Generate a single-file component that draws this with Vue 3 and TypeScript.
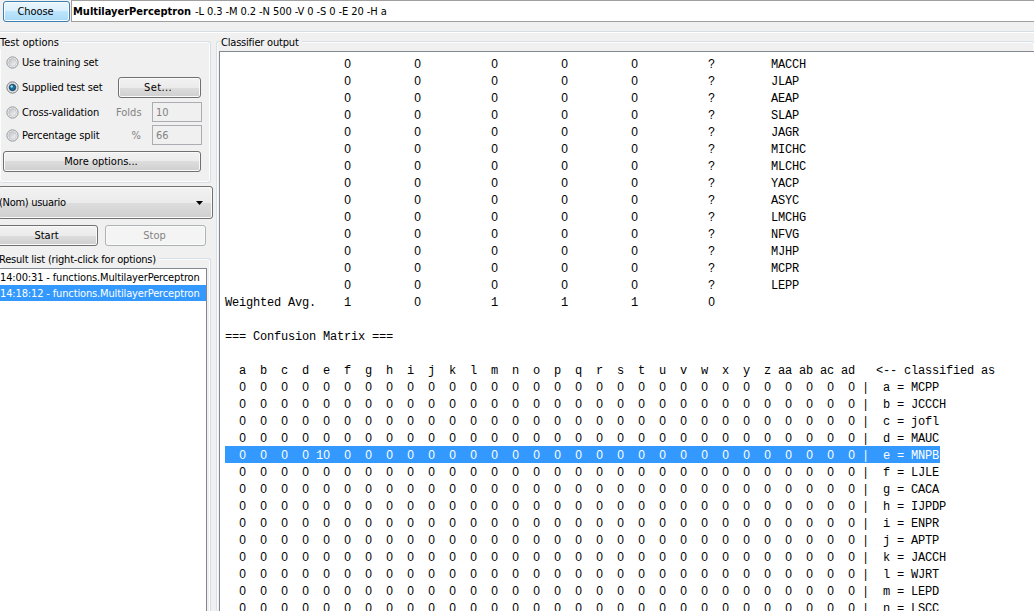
<script setup lang="ts">
const testOptions = [
  { label: 'Use training set', on: false, cls: 'training' },
  { label: 'Supplied test set', on: true, cls: 'supplied' },
  { label: 'Cross-validation', on: false, cls: 'cross' },
  { label: 'Percentage split', on: false, cls: 'percent' },
]

const results = ['14:00:31 - functions.MultilayerPerceptron', '14:18:12 - functions.MultilayerPerceptron']

const summaryClasses = [
  'MACCH', 'JLAP', 'AEAP', 'SLAP', 'JAGR', 'MICHC', 'MLCHC',
  'YACP', 'ASYC', 'LMCHG', 'NFVG', 'MJHP', 'MCPR', 'LEPP',
]
const matrixClasses = [
  'MCPP', 'JCCCH', 'jofl', 'MAUC', 'MNPB', 'LJLE', 'CACA',
  'IJPDP', 'ENPR', 'APTP', 'JACCH', 'WJRT', 'LEPD', 'LSCC',
]

const stops = [17, 27, 38, 48, 58, 69]
function statLine(head: string, values: string[], tail: string): string {
  let line = head
  values.forEach((v, i) => { line = line.padEnd(stops[i]) + v })
  return tail ? line.padEnd(78) + tail : line
}

const letters = 'abcdefghijklmnopqrstuvwxyz'.split('')
const columns = [...letters, 'aa', 'ab', 'ac', 'ad']
const selectedClass = 4

interface Line { parts: string[]; selected: boolean }
function toLine(text: string, selected = false): Line {
  return { parts: text.split(/(0)/).filter((p) => p !== ''), selected }
}

const lines: Line[] = [
  ...summaryClasses.map((c) => toLine(statLine('', ['0', '0', '0', '0', '0', '?'], c))),
  toLine(statLine('Weighted Avg.', ['1', '0', '1', '1', '1', '0'], '')),
  toLine(''),
  toLine('=== Confusion Matrix ==='),
  toLine(''),
  toLine(columns.map((c) => c.padStart(3)).join('') + '   <-- classified as'),
  ...matrixClasses.map((c, row) => {
    const cells = columns.map((_, col) => (row === selectedClass && col === 4 ? '10' : '0').padStart(3)).join('')
    return toLine(`${cells} |  ${letters[row]} = ${c}`, row === selectedClass)
  }),
]
</script>

<template>
  <div class="window">
    <header class="chooser">
      <button class="btn choose"><span class="t-choose">Choose</span></button>
      <div class="scheme"><b>MultilayerPerceptron</b><span class="args">-L 0.3 -M 0.2 -N 500 -V 0 -S 0 -E 20 -H a</span></div>
    </header>
    <main class="body">
      <aside class="side">
        <section class="group options">
          <h2 class="title"><span class="t-test">Test options</span></h2>
          <div v-for="o in testOptions" :key="o.cls" class="option" :class="o.cls">
            <svg class="radio" width="13" height="13" viewBox="0 0 13 13">
              <defs>
                <linearGradient :id="'r-' + o.cls" x1="0" y1="0" x2="1" y2="1">
                  <stop offset="0" stop-color="#b9bdc2" />
                  <stop offset="1" stop-color="#fbfbfb" />
                </linearGradient>
              </defs>
              <circle cx="6.5" cy="6.5" r="5.6" fill="#f6f6f6" :stroke="o.on ? '#6f7275' : '#8e9092'" />
              <circle cx="6.5" cy="6.5" r="3.9" :fill="`url(#r-${o.cls})`" stroke="#b6babe" stroke-width=".7" />
              <template v-if="o.on">
                <circle cx="6.5" cy="6.5" r="3.1" fill="#1c6f9e" stroke="#123c58" />
                <circle cx="5.7" cy="5.5" r="1.2" fill="#8fdcf4" />
              </template>
            </svg>
            <span class="label">{{ o.label }}</span>
            <button v-if="o.cls === 'supplied'" class="btn set"><span class="t-set">Set...</span></button>
            <template v-if="o.cls === 'cross'">
              <span class="unit">Folds</span><span class="field">10</span>
            </template>
            <template v-if="o.cls === 'percent'">
              <span class="unit">%</span><span class="field">66</span>
            </template>
          </div>
          <button class="btn more"><span class="t-more">More options...</span></button>
        </section>
        <div class="btn combo">
          <span class="t-nom">(Nom) usuario</span>
          <svg width="7" height="4" viewBox="0 0 7 4"><path d="M0 0h7L3.5 4z" /></svg>
        </div>
        <div class="actions">
          <button class="btn start"><span>Start</span></button>
          <button class="btn stop"><span>Stop</span></button>
        </div>
        <section class="group results">
          <h2 class="title"><span class="t-result">Result list (right-click for options)</span></h2>
          <ul class="list">
            <li v-for="(r, i) in results" :key="r" :class="{ active: i === 1 }"><span>{{ r }}</span></li>
          </ul>
        </section>
      </aside>
      <section class="group output">
        <h2 class="title"><span class="t-output">Classifier output</span></h2>
        <div class="console">
          <div v-for="(l, i) in lines" :key="i" class="line">
            <span class="run" :class="{ selected: l.selected }"><span v-for="(p, j) in l.parts" :key="j" :class="p === '0' ? 'zero' : 'text'">{{ p }}</span></span>
          </div>
        </div>
      </section>
    </main>
  </div>
</template>

<style>
body { margin: 0; overflow: hidden; background: #f0f0f0; }
</style>

<style scoped>
* { box-sizing: border-box; }
.window {
  width: 1034px; height: 611px; overflow: hidden; background: #f0f0f0; color: #000;
  font: 11px/14px "DejaVu Sans Condensed", "DejaVu Sans", sans-serif;
  display: flex; flex-direction: column;
}
span { white-space: pre; }
.chooser { height: 33px; flex: none; display: flex; align-items: flex-start; border-bottom: 1px solid #fff; box-shadow: inset 0 -1px #d5dfe5; padding-left: 3px; }
.btn {
  font: inherit; color: #000; padding: 0; display: flex; align-items: center; justify-content: center;
  border: 1px solid #707070; border-radius: 3px; box-shadow: inset 0 0 0 1px #fafafa;
  background: linear-gradient(#f2f2f2, #ebebeb 50%, #dddddd 50%, #cfcfcf);
}
.choose { width: 67px; height: 21px; margin-top: 1px; padding-right: 2px; border-color: #3c7fb1; background: linear-gradient(#eaf6fd, #d9f0fc 50%, #bee6fd 50%, #a7d9f5); }
.t-choose { letter-spacing: -.1px; }
.scheme { flex: 1; height: 22px; margin-left: 1px; border: 1px solid #a0a0a0; border-right: 0; background: #fff; padding: 4px 0 0 1px; display: flex; gap: 4px; white-space: pre; }
.scheme b { letter-spacing: -.01px; }
.args { letter-spacing: -.08px; }
.body { flex: 1; min-height: 0; display: flex; }
.side { width: 216px; flex: none; display: flex; flex-direction: column; }
.group { border: 1px solid #d5dfe5; border-radius: 3px; box-shadow: inset 0 0 0 1px #fafcfd; }
.title { font: inherit; margin: 0; height: 14px; }
.title span { background: #f0f0f0; padding-right: 3px; display: inline-block; height: 14px; line-height: 16px; }
.options { width: 211px; height: 142px; margin-top: 8px; border-left: 0; flex: none; }
.options .title, .results .title, .output .title { margin-top: -7px; }
.option { display: flex; align-items: center; padding-left: 6px; height: 23px; }
.training { margin-top: 2px; }
.supplied { height: 27px; }
.radio { margin-right: 3px; flex: none; }
.label { width: 94px; flex: none; letter-spacing: -.13px; }
.supplied .label { letter-spacing: -.18px; }
.set { width: 83px; height: 21px; margin-left: 2px; padding-right: 3px; }
.t-set { letter-spacing: .35px; }
.unit { color: #838383; width: 25px; text-align: right; }
.field { width: 50px; height: 20px; margin: -2px 0 0 11px; border: 1px solid #abadb3; color: #838383; padding: 3px 3px 0; }
.more { width: 198px; height: 21px; margin: 4px 0 0 3px; padding-right: 2px; }
.combo { width: 215px; height: 33px; margin: 3px 0 0 -2px; padding: 0 9px 0 0; justify-content: space-between; flex: none; }
.t-nom { letter-spacing: -.3px; }
.actions { display: flex; gap: 7px; margin-top: 6px; flex: none; }
.start { width: 101px; height: 21px; margin-left: -3px; padding-right: 2px; }
.stop { width: 101px; height: 21px; padding-right: 2px; color: #838383; border-color: #adb2b5; background: #f4f4f4; }
.results { width: 211px; flex: 1; margin-top: 12px; border-left: 0; border-bottom: 0; }
.t-result { letter-spacing: -.2px; margin-left: -1px; }
.list { list-style: none; margin: 2px 0 0 -1px; padding: 0; width: 208px; height: 346px; border: 1px solid #828790; background: #fff; letter-spacing: -.14px; }
.list li { height: 16px; line-height: 17px; }
.list .active { background: #3399ff; color: #fff; }
.output { flex: 1; min-width: 0; margin-top: 8px; border-right: 0; border-bottom: 0; padding-left: 2px; }
.output .title { padding-left: 2px; }
.t-output { letter-spacing: -.2px; }
.console {
  margin-top: 2px; height: 562px; border: 1px solid #828790; border-right: 0; background: #fff; padding: 3px 0 0 5px;
  font: 12px/17px "Liberation Mono", monospace; letter-spacing: -.2012px; overflow: hidden;
}
.line { height: 17px; }
.run { display: flex; width: max-content; height: 17px; }
.text { line-height: 20px; height: 17px; }
.selected { background: #3399ff; color: #fff; padding-right: 1px; }
.zero { width: 7px; display: flex; justify-content: center; letter-spacing: 0; font-family: "Liberation Sans Narrow", "Liberation Sans", sans-serif; line-height: 19px; height: 17px; }
</style>
